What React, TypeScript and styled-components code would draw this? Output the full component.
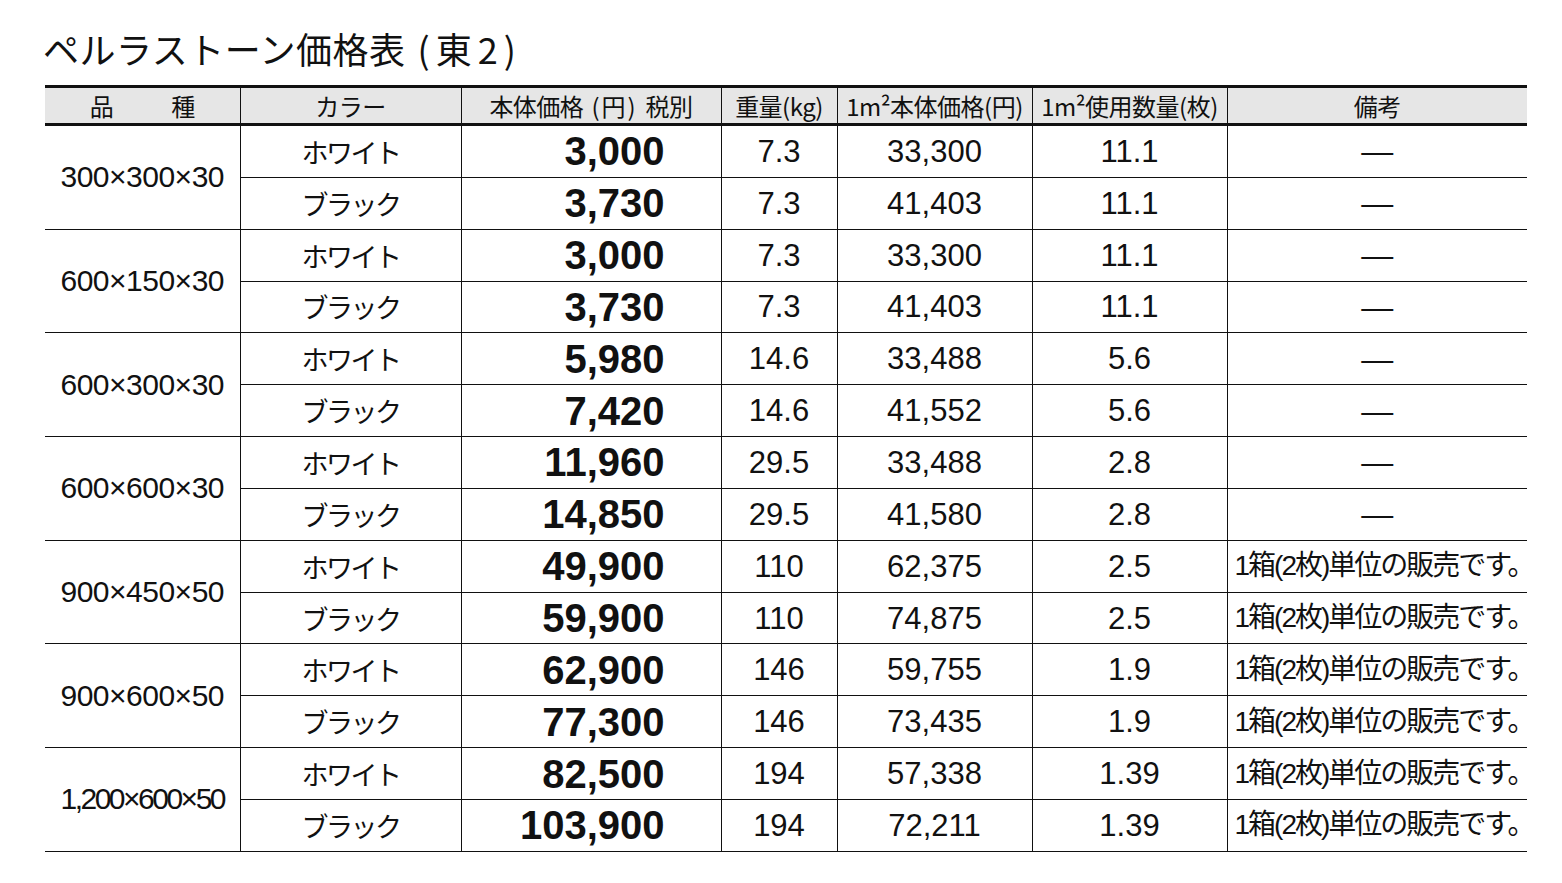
import React from 'react';
import styled, { createGlobalStyle } from 'styled-components';

const GlobalStyle = createGlobalStyle`
  html, body {
    margin: 0;
    padding: 0;
    background: #ffffff;
    color: #111111;
    font-family: "Liberation Sans", "Noto Sans CJK JP", sans-serif;
  }
`;

type Row = {
  color: string;
  price: string;
  weight: string;
  unitPrice: string;
  perSqm: string;
  note: string;
};

const BOX_NOTE = '1箱(2枚)単位の販売です。';

const groups: { size: string; tight?: boolean; rows: Row[] }[] = [
  {
    size: '300×300×30',
    rows: [
      { color: 'ホワイト', price: '3,000', weight: '7.3', unitPrice: '33,300', perSqm: '11.1', note: '' },
      { color: 'ブラック', price: '3,730', weight: '7.3', unitPrice: '41,403', perSqm: '11.1', note: '' },
    ],
  },
  {
    size: '600×150×30',
    rows: [
      { color: 'ホワイト', price: '3,000', weight: '7.3', unitPrice: '33,300', perSqm: '11.1', note: '' },
      { color: 'ブラック', price: '3,730', weight: '7.3', unitPrice: '41,403', perSqm: '11.1', note: '' },
    ],
  },
  {
    size: '600×300×30',
    rows: [
      { color: 'ホワイト', price: '5,980', weight: '14.6', unitPrice: '33,488', perSqm: '5.6', note: '' },
      { color: 'ブラック', price: '7,420', weight: '14.6', unitPrice: '41,552', perSqm: '5.6', note: '' },
    ],
  },
  {
    size: '600×600×30',
    rows: [
      { color: 'ホワイト', price: '11,960', weight: '29.5', unitPrice: '33,488', perSqm: '2.8', note: '' },
      { color: 'ブラック', price: '14,850', weight: '29.5', unitPrice: '41,580', perSqm: '2.8', note: '' },
    ],
  },
  {
    size: '900×450×50',
    rows: [
      { color: 'ホワイト', price: '49,900', weight: '110', unitPrice: '62,375', perSqm: '2.5', note: BOX_NOTE },
      { color: 'ブラック', price: '59,900', weight: '110', unitPrice: '74,875', perSqm: '2.5', note: BOX_NOTE },
    ],
  },
  {
    size: '900×600×50',
    rows: [
      { color: 'ホワイト', price: '62,900', weight: '146', unitPrice: '59,755', perSqm: '1.9', note: BOX_NOTE },
      { color: 'ブラック', price: '77,300', weight: '146', unitPrice: '73,435', perSqm: '1.9', note: BOX_NOTE },
    ],
  },
  {
    size: '1,200×600×50',
    tight: true,
    rows: [
      { color: 'ホワイト', price: '82,500', weight: '194', unitPrice: '57,338', perSqm: '1.39', note: BOX_NOTE },
      { color: 'ブラック', price: '103,900', weight: '194', unitPrice: '72,211', perSqm: '1.39', note: BOX_NOTE },
    ],
  },
];

const App: React.FC = () => {
  return (
    <Page>
      <GlobalStyle />
      <Title>
        ペルラストーン価格表<TitleNote>(東2)</TitleNote>
      </Title>
      <PriceTable>
        <colgroup>
          <col style={{ width: 195 }} />
          <col style={{ width: 221 }} />
          <col style={{ width: 260 }} />
          <col style={{ width: 116 }} />
          <col style={{ width: 195 }} />
          <col style={{ width: 195 }} />
          <col style={{ width: 300 }} />
        </colgroup>
        <thead>
          <tr>
            <HeadCell $first>
              <Spread>品<span>種</span></Spread>
            </HeadCell>
            <HeadCell>カラー</HeadCell>
            <HeadCell>本体価格<Paren>(円)</Paren>税別</HeadCell>
            <HeadCell>重量(kg)</HeadCell>
            <HeadCell>1m²本体価格(円)</HeadCell>
            <HeadCell>1m²使用数量(枚)</HeadCell>
            <HeadCell $last>備考</HeadCell>
          </tr>
        </thead>
        <tbody>
          {groups.map((g) =>
            g.rows.map((r, i) => (
              <tr key={g.size + r.color}>
                {i === 0 && (
                  <SizeCell rowSpan={2} $tight={g.tight}>
                    {g.size}
                  </SizeCell>
                )}
                <ColorCell>{r.color}</ColorCell>
                <PriceCell>{r.price}</PriceCell>
                <NumCell>{r.weight}</NumCell>
                <NumCell>{r.unitPrice}</NumCell>
                <NumCell>{r.perSqm}</NumCell>
                {r.note ? <NoteCell>{r.note}</NoteCell> : <DashCell>—</DashCell>}
              </tr>
            ))
          )}
        </tbody>
      </PriceTable>
    </Page>
  );
};

export default App;

const Page = styled.div`
  padding: 26px 35px 0 45px;
  width: 1482px;
`;

const Title = styled.h1`
  margin: 0 0 15px -2px;
  font-family: "Noto Sans CJK JP", sans-serif;
  font-weight: 400;
  font-size: 36px;
  line-height: 44px;
  letter-spacing: 0.5px;
  color: #111;
`;

const TitleNote = styled.span`
  margin-left: 12px;
  letter-spacing: 6px;
`;

const PriceTable = styled.table`
  width: 1482px;
  table-layout: fixed;
  border-collapse: collapse;
  border-top: 3px solid #111;
  border-bottom: 1px solid #111;
`;

const HeadCell = styled.th<{ $first?: boolean; $last?: boolean }>`
  height: 35px;
  padding: 0;
  background: #e6e6e6;
  border-bottom: 3px solid #111;
  border-left: ${(p) => (p.$first ? 'none' : '1px solid #111')};
  font-family: "Noto Sans CJK JP", sans-serif;
  font-weight: 400;
  font-size: 24px;
  letter-spacing: -0.5px;
  white-space: nowrap;
  text-align: center;
  color: #111;
  line-height: 1;
`;

const Paren = styled.span`
  margin: 0 8px;
  letter-spacing: 2px;
`;

const Spread = styled.span`
  display: inline-flex;
  gap: 58px;
`;

const BodyCell = styled.td`
  height: 50.85px;
  padding: 0;
  border-bottom: 1px solid #111;
  border-left: 1px solid #111;
  text-align: center;
  vertical-align: middle;
  white-space: nowrap;
  line-height: 1;
  color: #111;
`;

const SizeCell = styled(BodyCell)<{ $tight?: boolean }>`
  border-left: none;
  font-family: "Liberation Sans", sans-serif;
  font-size: 30px;
  letter-spacing: ${(p) => (p.$tight ? '-2.5px' : '-0.5px')};
`;

const ColorCell = styled(BodyCell)`
  font-family: "Noto Sans CJK JP", sans-serif;
  font-size: 27px;
  letter-spacing: -2.5px;
`;

const PriceCell = styled(BodyCell)`
  text-align: right;
  padding-right: 56px;
  font-family: "Liberation Sans", sans-serif;
  font-weight: 700;
  font-size: 40px;
`;

const NumCell = styled(BodyCell)`
  font-family: "Liberation Sans", sans-serif;
  font-size: 31px;
`;

const DashCell = styled(BodyCell)`
  font-family: "Liberation Sans", sans-serif;
  font-size: 32px;
`;

const NoteCell = styled(BodyCell)`
  text-align: left;
  padding-left: 7px;
  font-family: "Liberation Sans", "Noto Sans CJK JP", sans-serif;
  font-size: 28px;
  letter-spacing: -2px;
`;
